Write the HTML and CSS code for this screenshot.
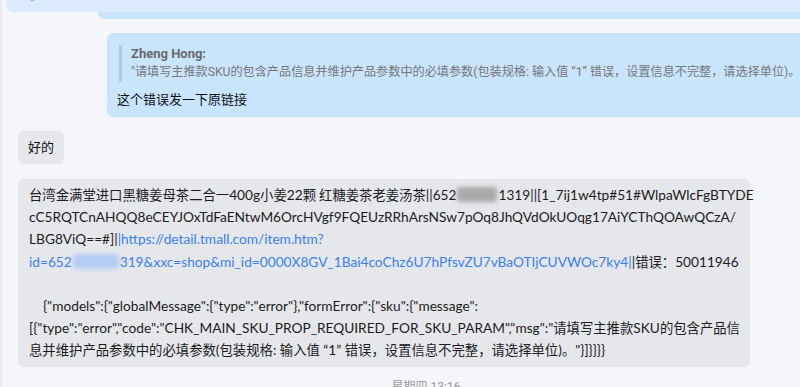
FILE: index.html
```html
<!DOCTYPE html>
<html lang="zh-CN">
<head>
<meta charset="utf-8">
<title>Chat</title>
<link rel="stylesheet" href="styles.css">
</head>
<body>
<div class="chat">
  <div class="row row-prev">
    <div class="bubble-prev"></div>
    <div class="top-overlay"><span class="top-dot"></span></div>
  </div>

  <div class="row row-user">
    <div class="bubble bubble-user">
      <div class="quote">
        <div class="quote-name">Zheng Hong:</div>
        <div class="quote-text">"请填写主推款SKU的包含产品信息并维护产品参数中的必填参数(包装规格: 输入值 “1” 错误，设置信息不完整，请选择单位)。</div>
      </div>
      <div class="user-text">这个错误发一下原链接</div>
    </div>
  </div>

  <div class="row row-other">
    <div class="bubble bubble-short">好的</div>
  </div>

  <div class="row row-other">
    <div class="bubble bubble-long">
      <div class="line"><span class="zh">台湾金满堂进口黑糖姜母茶二合一</span>400g<span class="zh">小姜</span>22<span class="zh">颗 红糖姜茶老姜汤茶</span>||652<span class="blur blur-gray"></span>1319||[1_7ij1w4tp#51#WlpaWlcFgBTYDE</div>
      <div class="line">cC5RQTCnAHQQ8eCEYJOxTdFaENtwM6OrcHVgf9FQEUzRRhArsNSw7pOq8JhQVdOkUOqg17AiYCThQOAwQCzA/</div>
      <div class="line">LBG8ViQ==#]|<a class="link" href="#">|https://detail.tmall.com/item.htm?</a></div>
      <div class="line"><a class="link" href="#">id=652<span class="blur blur-blue"></span>319&amp;xxc=shop&amp;mi_id=0000X8GV_1Bai4coChz6U7hPfsvZU7vBaOTIjCUVWOc7ky4|</a>|<span class="zh">错误：</span>50011946</div>
      <div class="line line-blank">&nbsp;</div>
      <div class="line line-indent">{"models":{"globalMessage":{"type":"error"},"formError":{"sku":{"message":</div>
      <div class="line">[{"type":"error","code":"CHK_MAIN_SKU_PROP_REQUIRED_FOR_SKU_PARAM","msg":"<span class="zh">请填写主推款</span>SKU<span class="zh">的包含产品信</span></div>
      <div class="line"><span class="zh">息并维护产品参数中的必填参数</span>(<span class="zh">包装规格</span>: <span class="zh">输入值</span> “1” <span class="zh">错误，设置信息不完整，请选择单位</span>)<span class="zh">。</span>"}]}}}}</div>
    </div>
  </div>

  <div class="time">星期四 13:16</div>
</div>
</body>
</html>
```

FILE: styles.css
```css
html, body {
  margin: 0;
  padding: 0;
}

body {
  width: 800px;
  height: 387px;
  overflow: hidden;
  background: #f5f6fa;
  font-family: Roboto, "Noto Sans CJK SC", sans-serif;
  color: #1c1c1c;
}

.chat {
  width: 850px;
  min-height: 387px;
  border-left: 2px solid #e9ebef;
  box-sizing: border-box;
  display: flex;
  flex-direction: column;
}

.row {
  display: flex;
}

.row-prev {
  position: relative;
  height: 19px;
}

.bubble-prev {
  margin-left: 96px;
  flex: 1;
  margin-right: 7px;
  background: #c8e5fd;
  border-radius: 0 0 6px 6px;
}

.top-overlay {
  position: absolute;
  top: 0;
  left: 5px;
  right: 0;
  height: 12px;
  background: #dbebfd;
  border-radius: 0 0 0 6px;
}

.top-dot {
  position: absolute;
  left: 24px;
  top: 0;
  width: 3px;
  height: 1px;
  background: #7fb0f0;
}

.bubble {
  border-radius: 6px;
  box-sizing: border-box;
}

.row-user {
  margin-top: 14px;
  padding-left: 105px;
  padding-right: 7px;
}

.bubble-user {
  flex: 1;
  background: #c8e5fd;
  padding: 12px 10px 7px 10px;
  overflow: hidden;
}

.quote {
  margin-left: 2px;
  border-left: 3px solid #b4cade;
  padding-left: 9px;
  white-space: nowrap;
}

.quote-name {
  font-size: 13px;
  font-weight: 700;
  color: #6a6a6a;
  line-height: 18px;
}

.quote-text {
  font-size: 12.15px;
  color: #777777;
  line-height: 19px;
}

.user-text {
  margin-top: 8px;
  font-size: 13px;
  line-height: 20px;
  color: #111111;
}

.row-other {
  padding-left: 16px;
}

.row-other + .row-other {
  margin-top: 15px;
}

.row-user + .row-other {
  margin-top: 14px;
}

.bubble-short {
  background: #e5e7eb;
  padding: 6px 10px;
  font-size: 13px;
  line-height: 21px;
  color: #111111;
}

.bubble-long {
  width: 732px;
  background: #e5e7eb;
  padding: 5px 11px 5px 11px;
  font-family: Lato, "Noto Sans CJK SC", sans-serif;
  font-size: 13.7px;
  line-height: 22.2px;
}

.zh {
  font-family: "Noto Sans CJK SC", sans-serif;
  font-size: 13.35px;
}

.line {
  white-space: nowrap;
}

.line-indent {
  padding-left: 14px;
}

.link {
  color: #3b7ff2;
  text-decoration: none;
}

.blur {
  display: inline-block;
  height: 15px;
  vertical-align: -2px;
  filter: blur(2px);
  border-radius: 3px;
}

.blur-gray {
  width: 40px;
  margin: 0 1px;
  background: #a9a9a9;
}

.blur-blue {
  width: 46px;
  margin: 0 1px;
  background: #b6cdf3;
}

.time {
  margin-top: 12px;
  text-align: center;
  font-size: 12px;
  line-height: 16px;
  color: #9a9a9a;
}
```
